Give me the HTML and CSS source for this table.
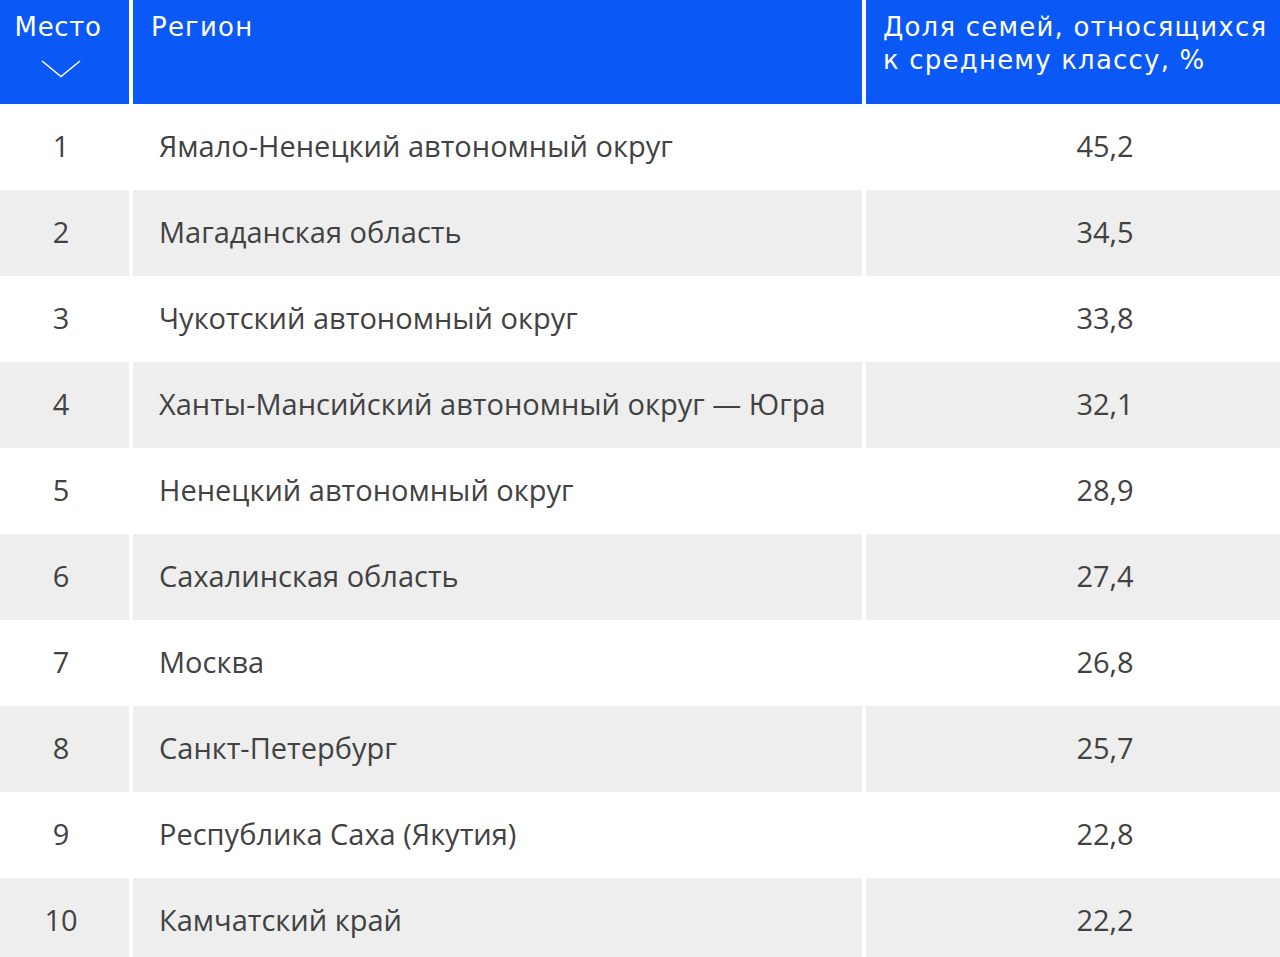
FILE: index.html
```html
<!DOCTYPE html>
<html lang="ru">
<head>
<meta charset="utf-8">
<title>Средний класс по регионам</title>
<link rel="stylesheet" href="styles.css">
</head>
<body>
<div class="table">
  <div class="row head">
    <div class="cell c1">
      <span>Место</span>
      <svg class="chev" width="40" height="18" viewBox="0 0 40 18"><path d="M1 1 L20 16.5 L39 1" fill="none" stroke="#fff" stroke-width="1.6"/></svg>
    </div>
    <div class="cell c2">Регион</div>
    <div class="cell c3">Доля семей, относящихся к среднему классу, %</div>
  </div>
  <div class="row"><div class="cell c1">1</div><div class="cell c2">Ямало-Ненецкий автономный округ</div><div class="cell c3">45,2</div></div>
  <div class="row alt"><div class="cell c1">2</div><div class="cell c2">Магаданская область</div><div class="cell c3">34,5</div></div>
  <div class="row"><div class="cell c1">3</div><div class="cell c2">Чукотский автономный округ</div><div class="cell c3">33,8</div></div>
  <div class="row alt"><div class="cell c1">4</div><div class="cell c2">Ханты-Мансийский автономный округ — Югра</div><div class="cell c3">32,1</div></div>
  <div class="row"><div class="cell c1">5</div><div class="cell c2">Ненецкий автономный округ</div><div class="cell c3">28,9</div></div>
  <div class="row alt"><div class="cell c1">6</div><div class="cell c2">Сахалинская область</div><div class="cell c3">27,4</div></div>
  <div class="row"><div class="cell c1">7</div><div class="cell c2">Москва</div><div class="cell c3">26,8</div></div>
  <div class="row alt"><div class="cell c1">8</div><div class="cell c2">Санкт-Петербург</div><div class="cell c3">25,7</div></div>
  <div class="row"><div class="cell c1">9</div><div class="cell c2">Республика Саха (Якутия)</div><div class="cell c3">22,8</div></div>
  <div class="row alt"><div class="cell c1">10</div><div class="cell c2">Камчатский край</div><div class="cell c3">22,2</div></div>
</div>
</body>
</html>
```
FILE: styles.css
```css
html, body {
  margin: 0;
  padding: 0;
  background: #fff;
}
body {
  overflow: hidden;
}
.table {
  width: 1280px;
  display: flex;
  flex-direction: column;
}
.row {
  display: grid;
  grid-template-columns: 129px 729px 414px;
  column-gap: 4px;
  height: 86px;
  font-family: "Open Sans", "Noto Sans", sans-serif;
  font-size: 29px;
  color: #424242;
}
.row.head {
  height: 104px;
}
.head .cell {
  background: #0a58f6;
  color: #fff;
  font-family: "DejaVu Sans", "Noto Sans", sans-serif;
  font-size: 26px;
  letter-spacing: 1.2px;
  line-height: 33px;
  padding-top: 11px;
  padding-bottom: 0;
  align-items: flex-start;
}
.head .c1 {
  flex-direction: column;
  justify-content: flex-start;
  align-items: center;
  padding-right: 13px;
  padding-left: 0;
  letter-spacing: 0.6px;
}
.head .c2 {
  padding-left: 18px;
}
.head .c3 {
  padding-left: 17px;
  padding-right: 4px;
}
.chev {
  display: block;
  margin-top: 16px;
  margin-left: 5px;
}
.cell {
  display: flex;
  align-items: center;
  box-sizing: border-box;
  padding-bottom: 3px;
}
.alt .cell {
  background: #eeeeee;
}
.c1 {
  justify-content: center;
  padding-right: 7px;
}
.c2 {
  padding-left: 26px;
}
.row:not(.head) .c3 {
  justify-content: center;
  padding-left: 64px;
}
```
